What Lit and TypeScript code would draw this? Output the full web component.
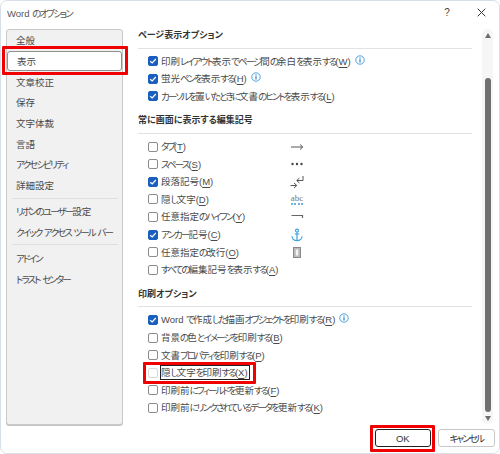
import { LitElement, html, css, nothing } from "lit";
import { customElement } from "lit/decorators.js";

type Opt = { label: string; key: string; on?: boolean; info?: boolean; sym?: string; focus?: boolean };

const page: Opt[] = [
  { label: "印刷レイアウト表示でページ間の余白を表示する", key: "W", on: true, info: true },
  { label: "蛍光ペンを表示する", key: "H", on: true, info: true },
  { label: "カーソルを置いたときに文書のヒントを表示する", key: "L", on: true },
];
const marks: Opt[] = [
  { label: "タブ", key: "T", sym: "tab" },
  { label: "スペース", key: "S", sym: "space" },
  { label: "段落記号", key: "M", on: true, sym: "para" },
  { label: "隠し文字", key: "D", sym: "abc" },
  { label: "任意指定のハイフン", key: "Y", sym: "hyphen" },
  { label: "アンカー記号", key: "C", on: true, sym: "anchor" },
  { label: "任意指定の改行", key: "O", sym: "break" },
  { label: "すべての編集記号を表示する", key: "A" },
];
const print: Opt[] = [
  { label: "Word で作成した描画オブジェクトを印刷する", key: "R", on: true, info: true },
  { label: "背景の色とイメージを印刷する", key: "B" },
  { label: "文書プロパティを印刷する", key: "P" },
  { label: "隠し文字を印刷する", key: "X", focus: true },
  { label: "印刷前にフィールドを更新する", key: "F" },
  { label: "印刷前にリンクされているデータを更新する", key: "K" },
];

const side: (string | null)[] = [
  "全般", "表示", "文章校正", "保存", "文字体裁", "言語", "アクセシビリティ", "詳細設定", null,
  "リボンのユーザー設定", "クイック アクセス ツール バー", null, "アドイン", "トラスト センター",
];

const syms: Record<string, unknown> = {
  tab: html`<svg width="14" height="10" viewBox="0 0 14 10"><path d="M1 5H12.5M10 2.5 12.8 5 10 7.5" fill="none" stroke="#555" stroke-width="1"/></svg>`,
  space: html`<svg width="14" height="10" viewBox="0 0 14 10"><g fill="#444"><circle cx="2.5" cy="5" r="1.2"/><circle cx="7" cy="5" r="1.2"/><circle cx="11.5" cy="5" r="1.2"/></g></svg>`,
  para: html`<svg width="14" height="14" viewBox="0 0 14 14"><g fill="none" stroke="#555" stroke-width="1"><path d="M0.5 10.5H6.5M4 8 6.8 10.5 4 13"/><path d="M13 1V5.5H7M9.5 3 6.7 5.5 9.5 8"/></g></svg>`,
  abc: html`<span class="abc">abc</span>`,
  hyphen: html`<svg width="14" height="10" viewBox="0 0 14 10"><path d="M1.5 3.5H12.5V6" fill="none" stroke="#666" stroke-width="1.2"/></svg>`,
  anchor: html`<svg width="12" height="14" viewBox="0 0 12 14"><g fill="none" stroke="#3f9fe0" stroke-width="1.2"><circle cx="6" cy="2.6" r="1.5"/><path d="M6 4.2V12.6M3.6 6H8.4M1 8.2C1 11 3.4 12.6 6 12.6S11 11 11 8.2"/></g></svg>`,
  break: html`<svg width="8" height="11" viewBox="0 0 8 11"><rect x="0.5" y="0.5" width="7" height="10" fill="#bbb" stroke="#888"/><rect x="2.8" y="2.5" width="2.4" height="6" fill="#f4f4f4"/></svg>`,
};

const info = html`<svg class="info" width="10" height="10" viewBox="0 0 10 10"><circle cx="5" cy="5" r="4.2" fill="#fff" stroke="#4aa3df" stroke-width="1"/><path d="M5 4.3V7.4" stroke="#2b7cc0" stroke-width="1.2"/><circle cx="5" cy="2.9" r=".7" fill="#2b7cc0"/></svg>`;

/** Kana in the reference's UI font are narrower than in Noto; tighten just those runs. */
const tight = (s: string) =>
  s.split(/([\u3040-\u30ff]+)/).map((part, i) => (i % 2 ? html`<span class="k">${part}</span>` : part));

@customElement("app-root")
export class AppRoot extends LitElement {
  static styles = css`
    :host { display: block; width: 500px; height: 454px; font-family: "Liberation Sans", "Noto Sans CJK JP", sans-serif; color: #3c3c3c; font-feature-settings: "palt" 1; }
    * { box-sizing: border-box; }
    .k { letter-spacing: -1.9px; }
    .dialog { position: relative; width: 500px; height: 454px; background: #fff; border: 1px solid #d9dfe8; border-radius: 7px; display: flex; flex-direction: column; overflow: hidden; }
    .title { height: 28px; flex: none; display: flex; align-items: center; padding: 0 0 5px 6px; font-size: 9.5px; color: #555; white-space: pre; }
    .title span.t { flex: 1; }
    .help { font-size: 10px; width: 14px; text-align: center; margin-right: 23px; color: #444; }
    .close { margin-right: 13px; display: flex; }
    .body { flex: 1; display: flex; min-height: 0; }
    .side { width: 117px; margin: 0 0 0 5px; height: 396px; background: #f1f1f1; border: 1px solid #c9c9c9; border-radius: 3px; box-shadow: 0 1px 0 #c4c4c4; display: flex; flex-direction: column; flex: none; }
    .nav { height: 20.7px; flex: none; display: flex; align-items: center; padding-left: 9px; font-size: 9.5px; color: #4a4a4a; white-space: pre; }
    .nav.sel { background: #fff; border: 1px solid #8f8f8f; border-radius: 3px; }
    .sep { height: 1px; background: #dedede; margin: 2px 0 2.5px 5px; width: 106px; flex: none; }
    .main { width: 334px; margin-left: 15px; flex: none; }
    .sec { display: flex; flex-direction: column; }
    .h { font-size: 9px; font-weight: 700; height: 19.5px; line-height: 12px; color: #333; border-bottom: 1px solid #e2e2e2; margin-bottom: 4px; white-space: nowrap; }
    .rows { display: flex; flex-direction: column; padding-left: 10px; }
    .row { height: 17.6px; display: grid; grid-template-columns: 13px 121px 30px; align-items: center; font-size: 9.5px; color: #4a4a4a; white-space: pre; }
    .row.wide { display: flex; }
    .box { width: 10px; height: 10px; border: 1px solid #8c8c8c; border-radius: 2px; background: #fff; display: flex; align-items: center; justify-content: center; flex: none; }
    .box.on { background: #1a5fc0; border-color: #1a5fc0; }
    .box.dim { border-color: #d8d8d8; }
    .wide .box { margin-right: 3px; }
    u { text-underline-offset: 1.5px; }
    .lbl { display: inline-block; line-height: 13px; }
    .focus { outline: 1px solid #222; outline-offset: 0; padding: 0 1px 0 0; }
    .info { margin-left: 4px; flex: none; margin-top: -3px; }
    .sym { justify-self: center; display: flex; align-items: center; justify-content: center; width: 20px; height: 14px; }
    .abc { font-size: 9px; line-height: 10px; color: #777; border-bottom: 2px dotted #6db3e8; font-family: "Liberation Serif", serif; }
    .gap { height: 9px; }
    .gap2 { height: 9.1px; }
    .scroll { width: 11px; margin-left: 10px; height: 395px; background: #f6f6f6; border-radius: 5px; flex: none; display: flex; flex-direction: column; align-items: center; }
    .arrow { width: 0; height: 0; border-left: 3.5px solid transparent; border-right: 3.5px solid transparent; flex: none; }
    .arrow.up { border-bottom: 5px solid #6e6e6e; margin-top: 4px; }
    .arrow.down { border-top: 5px solid #6e6e6e; }
    .thumb { width: 6px; background: #707070; border-radius: 3px; height: 334px; margin-top: 40px; margin-bottom: 4px; flex: none; }
    .foot { position: absolute; right: 4.5px; bottom: 6px; display: flex; gap: 7px; }
    .btn { height: 18px; border: 1px solid #c8c8c8; border-radius: 3px; background: #fff; font-size: 9.5px; display: flex; align-items: center; justify-content: center; color: #333; width: 56.5px; }
    .ok { border: 1.5px solid #222; }
    .red { position: absolute; border: 3px solid #f00000; border-radius: 1px; pointer-events: none; }
    .r1 { left: 1px; top: 45px; width: 126px; height: 29px; }
    .r2 { left: 142px; top: 361px; width: 113px; height: 22px; }
    .r3 { left: 369px; top: 424px; width: 65px; height: 27px; }
  `;

  private row(o: Opt) {
    const box = html`<span class="box ${o.on ? "on" : ""} ${o.focus ? "dim" : ""}">${o.on
      ? html`<svg width="8" height="8" viewBox="0 0 8 8"><path d="M1.2 4.2 3.2 6 6.8 2" fill="none" stroke="#fff" stroke-width="1.2"/></svg>`
      : nothing}</span>`;
    const text = html`<span class="lbl ${o.focus ? "focus" : ""}">${tight(o.label)}(<u>${o.key}</u>)</span>`;
    if (o.sym) return html`<div class="row">${box}${text}<span class="sym">${syms[o.sym]}</span></div>`;
    return html`<div class="row wide">${box}${text}${o.info ? info : nothing}</div>`;
  }

  private section(title: string, rows: Opt[]) {
    return html`<div class="sec"><div class="h">${title}</div><div class="rows">${rows.map((o) => this.row(o))}</div></div>`;
  }

  render() {
    return html`<div class="dialog">
      <div class="title"><span class="t">${tight("Word のオプション")}</span><span class="help">?</span><span class="close"><svg width="9" height="9" viewBox="0 0 9 9"><path d="M.7.7 8.3 8.3M8.3.7.7 8.3" stroke="#333" stroke-width="1"/></svg></span></div>
      <div class="body">
        <div class="side">
          ${side.map((s, i) => s === null ? html`<div class="sep"></div>` : html`<div class="nav ${i === 1 ? "sel" : ""}"><span>${tight(s)}</span></div>`)}
        </div>
        <div class="main">
          ${this.section("ページ表示オプション", page)}
          <div class="gap"></div>
          ${this.section("常に画面に表示する編集記号", marks)}
          <div class="gap2"></div>
          ${this.section("印刷オプション", print)}
        </div>
        <div class="scroll"><span class="arrow up"></span><div class="thumb"></div><span class="arrow down"></span></div>
      </div>
      <div class="foot"><div class="btn ok">OK</div><div class="btn"><span class="k">キャンセル</span></div></div>
      <div class="red r1"></div><div class="red r2"></div><div class="red r3"></div>
    </div>`;
  }
}
